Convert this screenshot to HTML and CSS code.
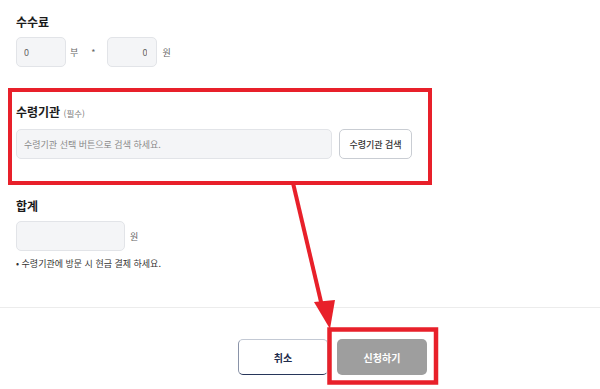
FILE: index.html
```html
<!DOCTYPE html>
<html lang="ko">
  <head>
    <meta charset="UTF-8" />
    <meta name="viewport" content="width=device-width, initial-scale=1.0" />
    <title>수령기관 신청</title>
    <link rel="stylesheet" href="styles.css">
  </head>
  <body>
    <div class="page">
      <div class="form">
        <div class="field fee">
          <h3>수수료</h3>
          <div class="row">
            <input class="box box-fee" type="text" value="0" />
            <span class="unit unit-bu">부</span>
            <span class="unit unit-star">*</span>
            <input class="box box-fee right" type="text" value="0" />
            <span class="unit">원</span>
          </div>
        </div>

        <div class="field agency">
          <h3>수령기관 <small>(필수)</small></h3>
          <div class="row">
            <input class="box box-wide" type="text" placeholder="수령기관 선택 버튼으로 검색 하세요." />
            <button class="btn-search">수령기관 검색</button>
          </div>
        </div>

        <div class="field total">
          <h3>합계</h3>
          <div class="row">
            <input class="box box-total" type="text" />
            <span class="unit">원</span>
          </div>
          <p class="note">• 수령기관에 방문 시 현금 결제 하세요.</p>
        </div>
      </div>

      <div class="divider"></div>

      <div class="actions">
        <button class="btn btn-cancel">취소</button>
        <button class="btn btn-submit">신청하기</button>
      </div>

      <!-- 안내용 표시 (빨간 박스 + 화살표) -->
      <svg class="marks" width="600" height="389" viewBox="0 0 600 389">
        <rect x="10" y="90" width="420" height="93" fill="none" stroke="#e8202a" stroke-width="4" />
        <rect x="329.5" y="329.5" width="106.5" height="53" fill="none" stroke="#e8202a" stroke-width="4.5" />
        <line x1="293" y1="183" x2="322" y2="306" stroke="#e8202a" stroke-width="4" />
        <polygon points="314,302 335,300 330,329" fill="#e8202a" />
      </svg>
    </div>
  </body>
</html>
```

FILE: styles.css
```css
* {
  margin: 0;
  padding: 0;
  box-sizing: border-box;
}

body {
  background: #ffffff;
  font-family: "Noto Sans CJK KR", "Noto Sans", sans-serif;
  color: #222;
}

.page {
  position: relative;
  width: 600px;
  height: 389px;
  overflow: hidden;
}

.form {
  padding: 13px 16px 0 16px;
}

.field h3 {
  font-size: 12px;
  font-weight: 700;
  line-height: 18px;
  color: #1b1b1b;
}

.field h3 small {
  font-size: 8.5px;
  font-weight: 400;
  color: #777;
}

.row {
  display: flex;
  align-items: center;
  margin-top: 6px;
}

.agency {
  margin-top: 36px;
}

.agency .row {
  margin-top: 7px;
}

.total {
  margin-top: 38px;
}

.box {
  height: 30px;
  border: 1px solid #e2e4e8;
  border-radius: 5px;
  background: #f4f5f7;
  padding: 0 7px;
  font-family: inherit;
  font-size: 9px;
  color: #666;
  outline: none;
}

.box::placeholder {
  color: #8a8a8a;
}

.box-fee {
  width: 50px;
}

.box-fee.right {
  text-align: right;
  padding-right: 9px;
}

.box-wide {
  width: 316px;
}

.box-total {
  width: 109px;
}

.unit {
  font-size: 9px;
  color: #666;
  margin-left: 5px;
}

.unit-bu {
  margin-left: 4px;
}

.unit-star {
  margin-left: 13px;
  margin-right: 12px;
}

.btn-search {
  width: 73px;
  height: 30px;
  margin-left: 7px;
  border: 1px solid #c9cdd3;
  border-radius: 5px;
  background: #fff;
  font-family: inherit;
  font-size: 9px;
  font-weight: 500;
  color: #333;
}

.note {
  margin-top: 6px;
  font-size: 9px;
  line-height: 14px;
  color: #333;
}

.divider {
  margin-top: 36px;
  height: 1px;
  background: #ececec;
}

.actions {
  display: flex;
  gap: 9px;
  margin-top: 31px;
  padding-left: 238px;
}

.btn {
  width: 90px;
  height: 36px;
  border-radius: 5px;
  font-family: inherit;
  font-size: 10px;
  font-weight: 700;
}

.btn-cancel {
  background: #fff;
  border: 1px solid #c3c9d4;
  border-bottom-color: #27365a;
  border-left-color: #8a93a8;
  color: #1f2c4c;
}

.btn-submit {
  background: #9e9e9e;
  border: none;
  color: #fff;
}

.marks {
  position: absolute;
  left: 0;
  top: 0;
  pointer-events: none;
}
```
